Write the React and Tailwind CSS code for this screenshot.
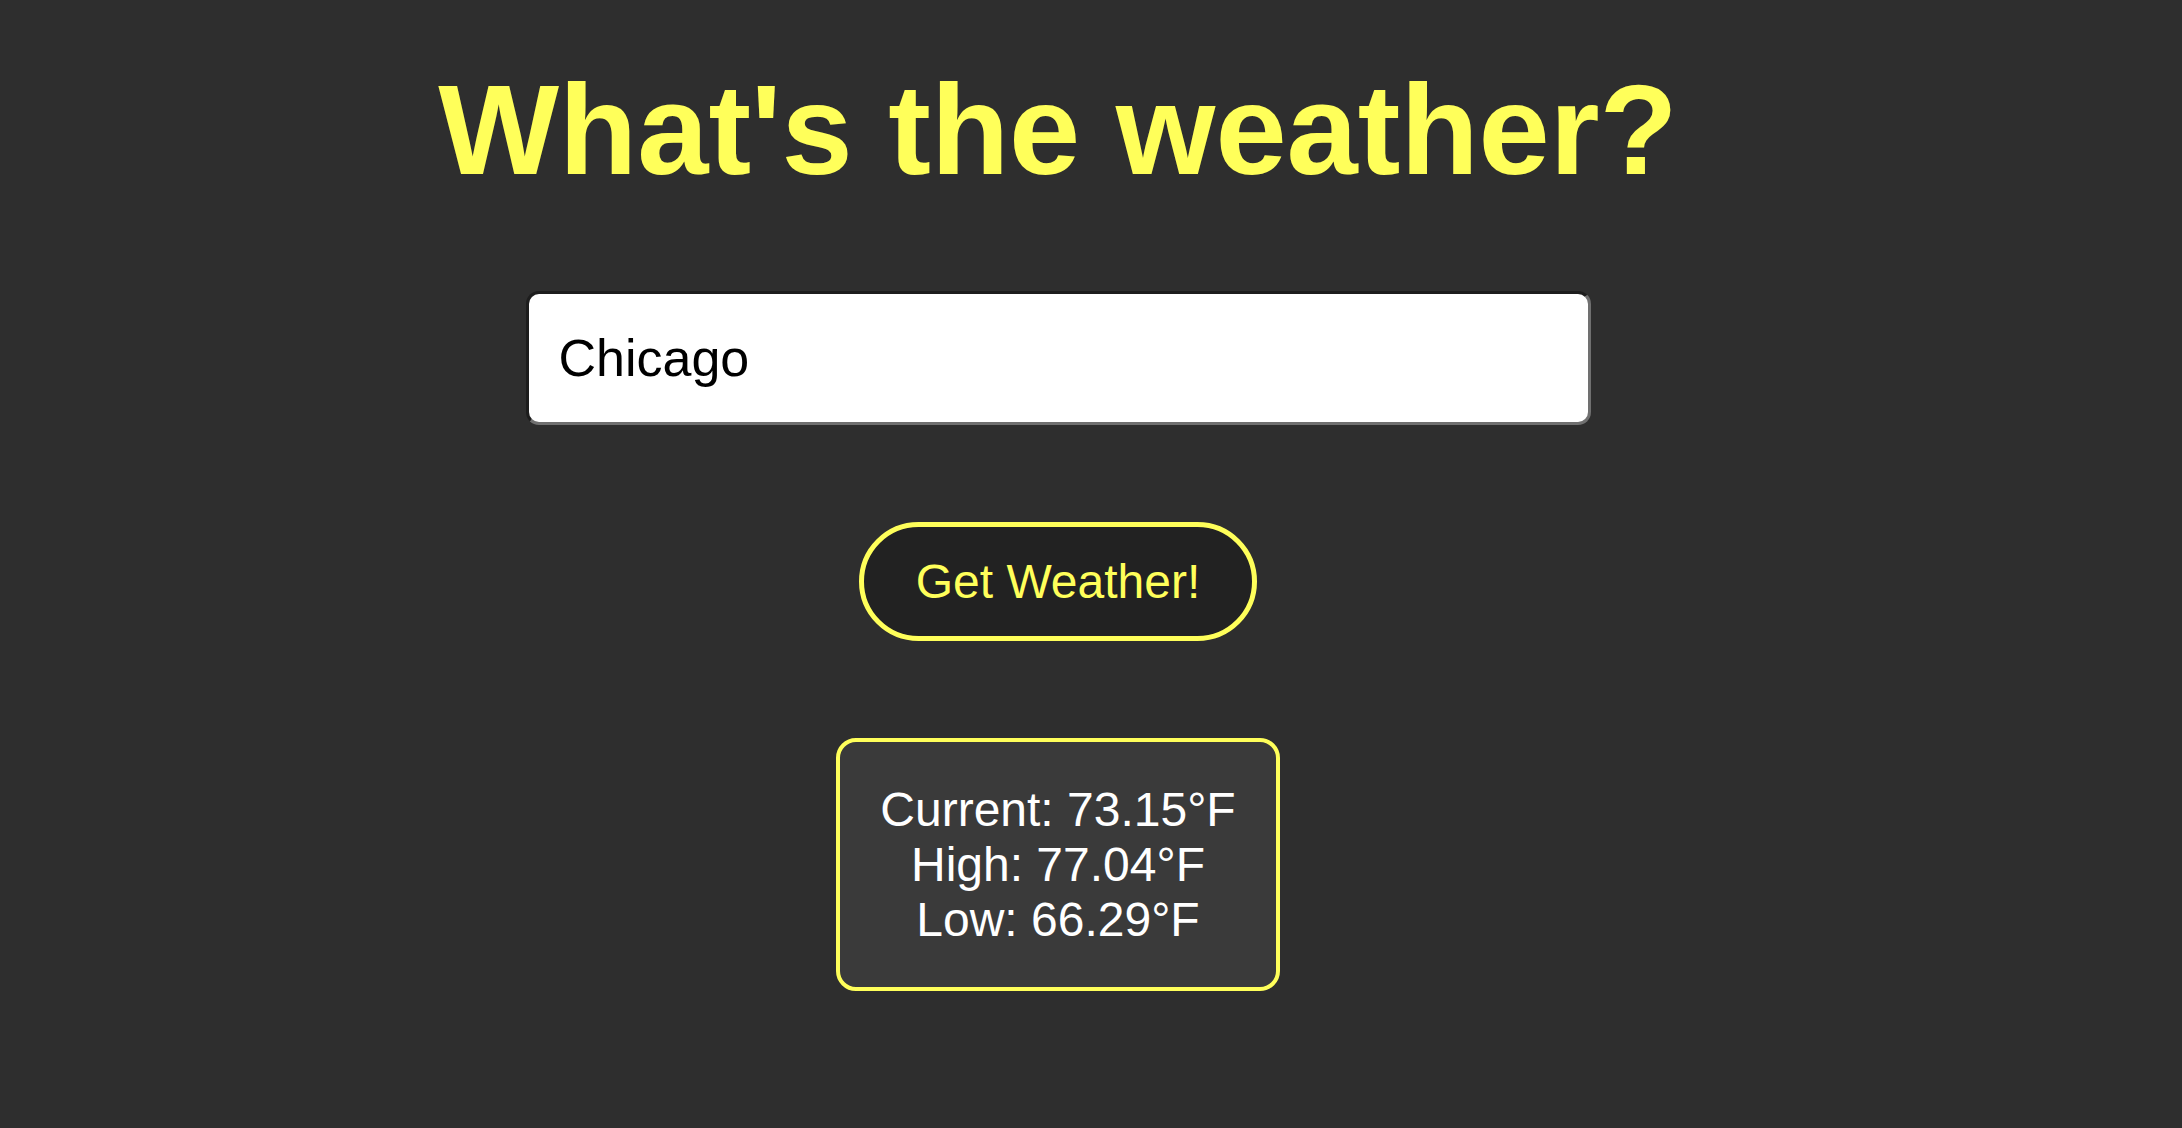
export default function App() {
  return (
    <div className="min-h-screen bg-[#2e2e2e] font-['Liberation_Sans',Arial,sans-serif]">
      <div className="w-[2116px] flex flex-col items-center gap-[97px] pt-[66px] pb-[100px]">
        <h1 className="text-[128px] leading-none font-bold text-[#ffff5a]">What's the weather?</h1>

        <input
          type="text"
          defaultValue="Chicago"
          className="w-[1065px] h-[134px] bg-white rounded-[13px] border-[3px] border-t-[#1d1d1d] border-l-[#1d1d1d] border-r-[#707070] border-b-[#707070] pl-[30px] text-[52px] text-black outline-none"
        />

        <button className="h-[119px] px-[52px] rounded-full border-[5px] border-[#ffff5a] bg-[#222222] text-[48px] text-[#ffff5a]">
          Get Weather!
        </button>

        <div className="rounded-[20px] border-4 border-[#ffff5a] bg-[#3a3a3a] px-[40px] py-[40px] text-center text-[48px] leading-[55px] text-white">
          <p>Current: 73.15°F</p>
          <p>High: 77.04°F</p>
          <p>Low: 66.29°F</p>
        </div>
      </div>
    </div>
  );
}
